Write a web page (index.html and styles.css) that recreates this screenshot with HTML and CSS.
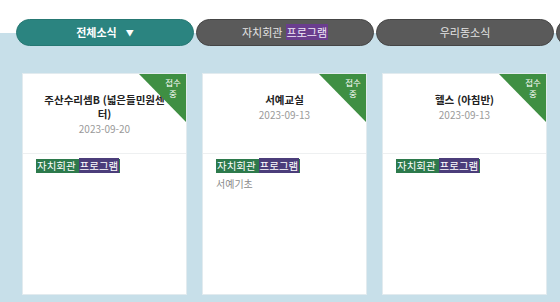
FILE: index.html
```html
<!DOCTYPE html>
<html lang="ko">
<head>
<meta charset="utf-8">
<link rel="stylesheet" href="styles.css">
</head>
<body>
<div class="page">
  <nav class="tabs">
    <div class="tab tab-active">전체소식 <span class="caret">▼</span></div>
    <div class="tab">자치회관 <span class="hl">프로그램</span></div>
    <div class="tab">우리동소식</div>
    <div class="tab"></div>
  </nav>
  <div class="cards">
    <div class="card">
      <div class="card-head">
        <div class="title">주산수리셈B (넓은들민원센터)</div>
        <div class="date">2023-09-20</div>
      </div>
      <div class="card-body">
        <span class="tag">자치회관 <span class="tag-hl">프로그램</span></span>
      </div>
      <div class="ribbon"></div>
      <div class="ribbon-text">접수<br>중</div>
    </div>
    <div class="card">
      <div class="card-head">
        <div class="title">서예교실</div>
        <div class="date">2023-09-13</div>
      </div>
      <div class="card-body">
        <span class="tag">자치회관 <span class="tag-hl">프로그램</span></span>
        <div class="desc">서예기초</div>
      </div>
      <div class="ribbon"></div>
      <div class="ribbon-text">접수<br>중</div>
    </div>
    <div class="card">
      <div class="card-head">
        <div class="title">헬스 (아침반)</div>
        <div class="date">2023-09-13</div>
      </div>
      <div class="card-body">
        <span class="tag">자치회관 <span class="tag-hl">프로그램</span></span>
      </div>
      <div class="ribbon"></div>
      <div class="ribbon-text">접수<br>중</div>
    </div>
  </div>
</div>
</body>
</html>
```

FILE: styles.css
```css
* { box-sizing: border-box; }
html, body {
  margin: 0;
  padding: 0;
  width: 560px;
  height: 302px;
  overflow: hidden;
  background: #ffffff;
  font-family: "Noto Sans CJK KR", "Noto Sans", sans-serif;
}
.page {
  width: 560px;
  height: 302px;
  background: linear-gradient(#ffffff 0, #ffffff 33px, #c7dfe9 33px);
  overflow: hidden;
}
.tabs {
  display: flex;
  gap: 2px;
  padding: 19px 0 0 16px;
  height: 46px;
  white-space: nowrap;
}
.tab {
  flex: 0 0 178px;
  height: 27px;
  border-radius: 14px;
  background: #5a5a5a;
  border: 1px solid #454545;
  color: #e4e4e4;
  font-size: 11px;
  line-height: 25px;
  text-align: center;
}
.tab-active {
  background: #2b8480;
  border-color: #267873;
  color: #ffffff;
  font-weight: bold;
}
.caret {
  font-size: 8px;
  margin-left: 6px;
  vertical-align: 1px;
}
.hl {
  background: #6a3d8e;
  color: #f2eaf8;
  padding: 0 1px;
}
.cards {
  display: flex;
  gap: 15px;
  padding: 27px 0 0 22px;
}
.card {
  position: relative;
  flex: 0 0 165px;
  height: 222px;
  background: #ffffff;
  border: 1px solid #e2ebef;
  overflow: hidden;
}
.card-head {
  height: 80px;
  border-bottom: 1px solid #eef0f1;
  padding: 19px 18px 0;
  text-align: center;
}
.title {
  font-size: 10.5px;
  font-weight: bold;
  color: #222;
  line-height: 14px;
}
.date {
  font-size: 10px;
  color: #9a9a9a;
  line-height: 14px;
  margin-top: 1px;
}
.card-body {
  padding: 5px 13px 0;
  font-size: 10.5px;
  line-height: 14px;
}
.tag {
  display: block;
  width: fit-content;
  background: #2d7a4c;
  color: #ffffff;
  font-size: 10.5px;
  line-height: 14px;
  padding: 0 1px;
}
.tag-hl {
  background: #4b3d7a;
  padding: 0 1px;
}
.desc {
  font-size: 10px;
  color: #8a8a8a;
  line-height: 14px;
  margin-top: 4px;
}
.ribbon {
  position: absolute;
  top: 0;
  right: 0;
  width: 0;
  height: 0;
  border-top: 48px solid #3f8f43;
  border-left: 47px solid transparent;
}
.ribbon-text {
  position: absolute;
  top: 3px;
  right: 3px;
  width: 20px;
  text-align: center;
  color: #ffffff;
  font-size: 8.5px;
  line-height: 11px;
}
```
